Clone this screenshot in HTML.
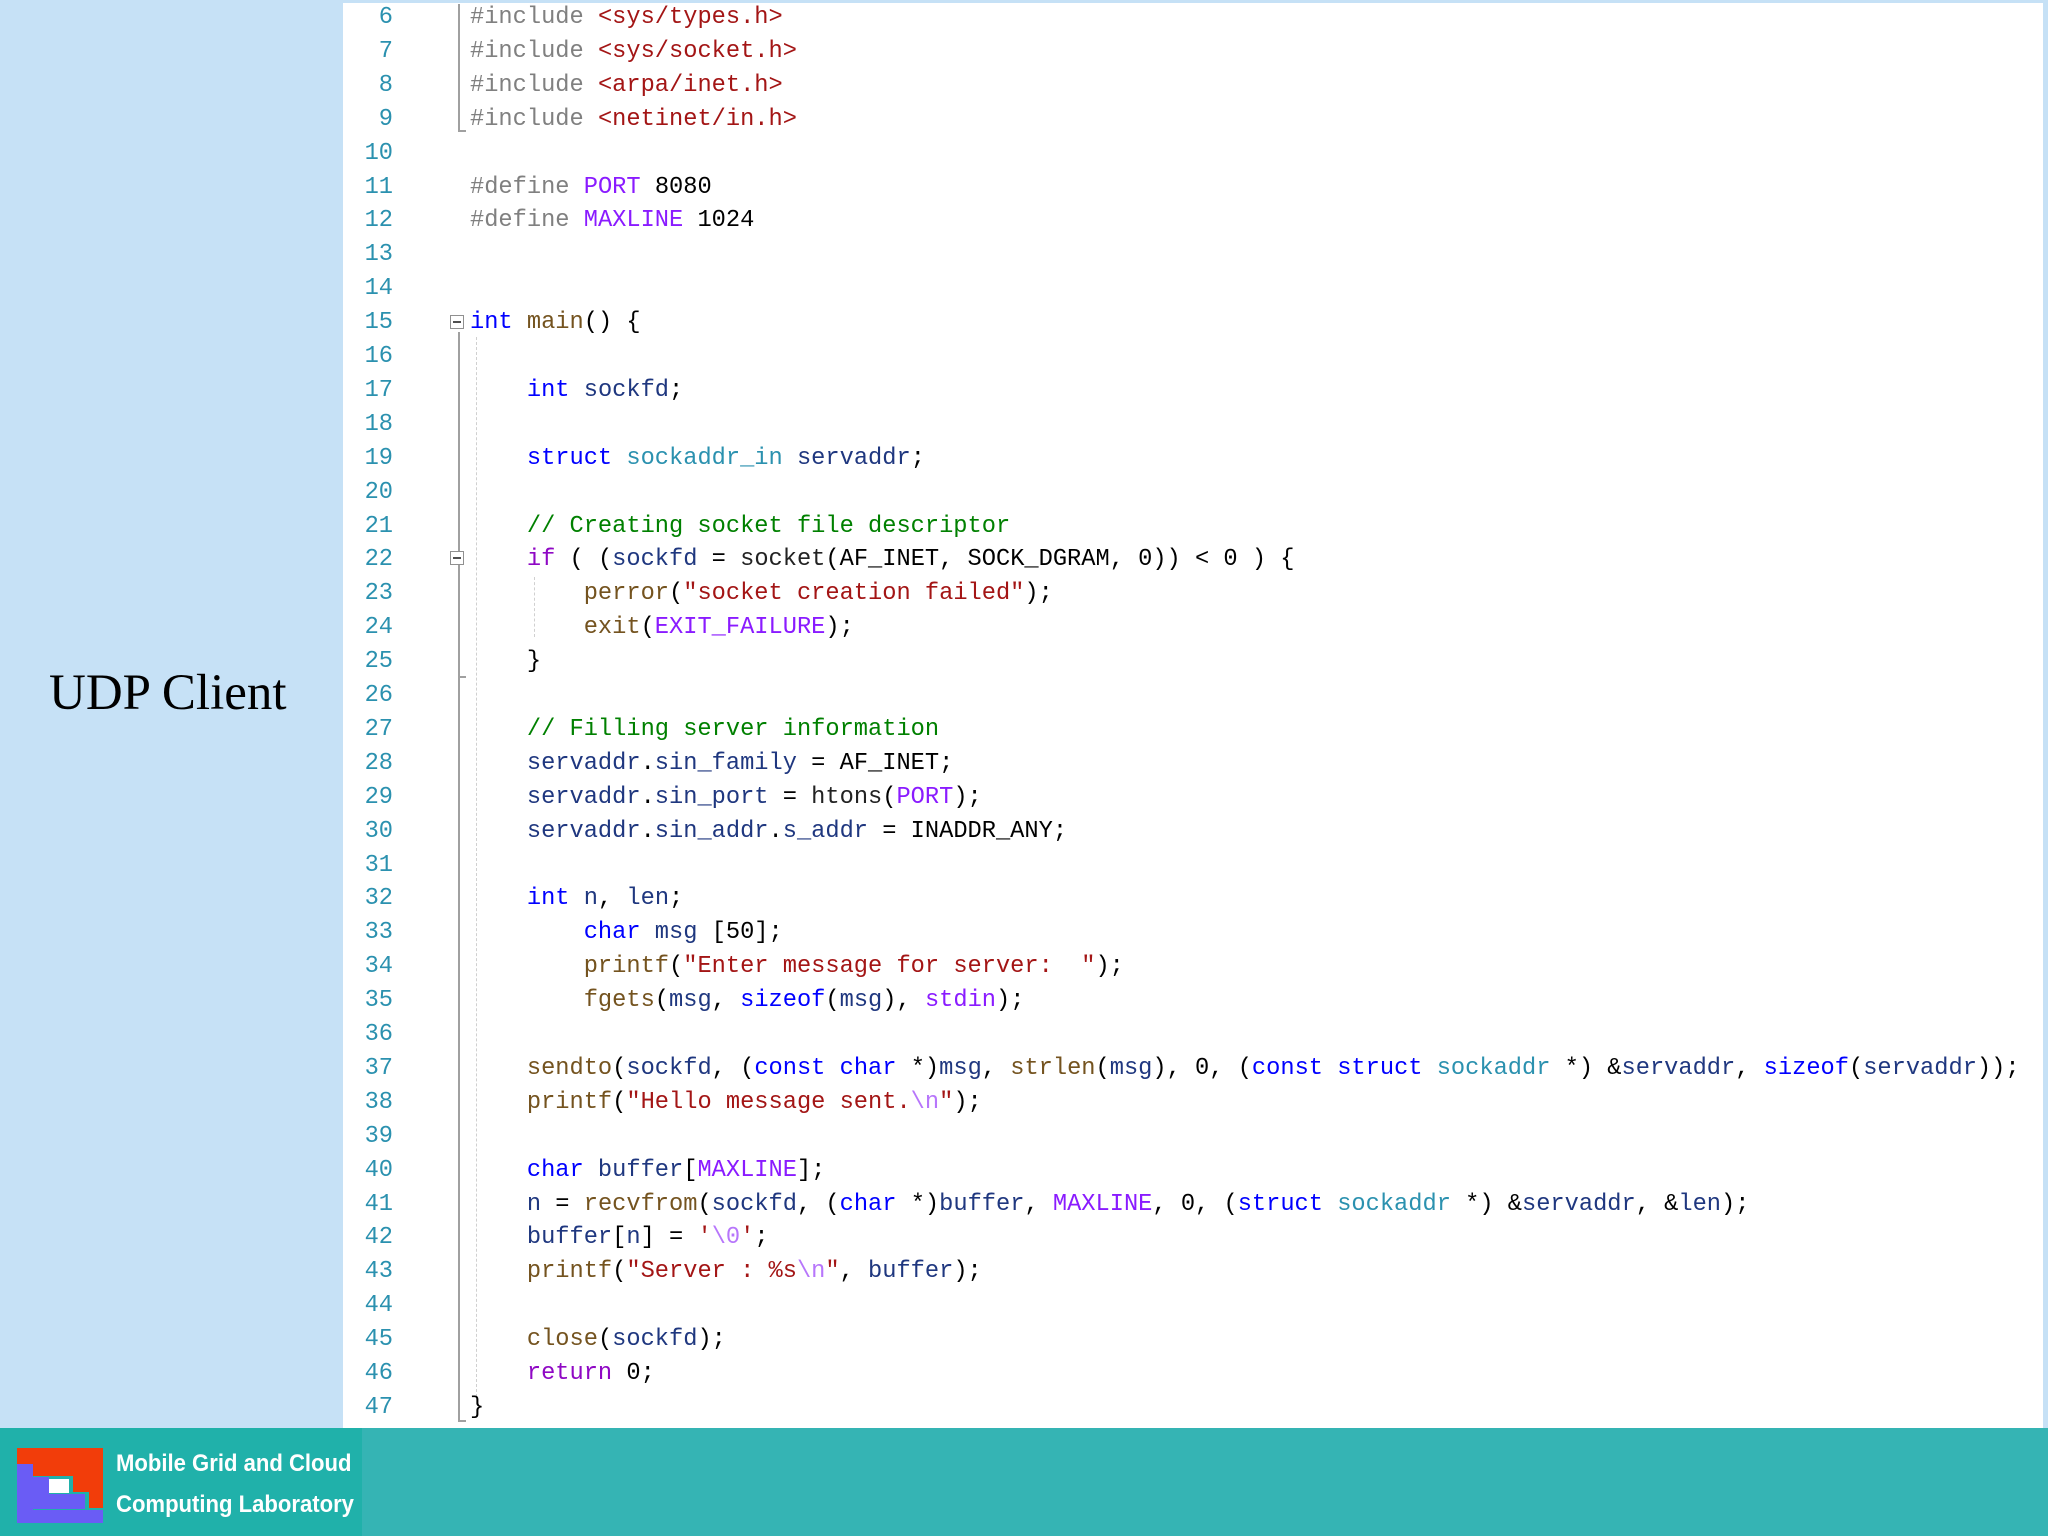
<!DOCTYPE html>
<html><head><meta charset="utf-8"><style>
html,body{margin:0;padding:0}
body{width:2048px;height:1536px;position:relative;overflow:hidden;background:#c6e1f6;font-family:"Liberation Mono",monospace}
#code{position:absolute;left:343px;top:3px;width:1700px;height:1425px;background:#fff}
#lines{position:absolute;left:0;top:4px;width:2048px;height:1424px}
.ln{position:absolute;left:343px;width:50px;text-align:right;color:#2b91af;font-size:23.7px;height:33.9px;line-height:33.9px;white-space:pre}
.cl{position:absolute;left:470px;font-size:23.7px;height:33.9px;line-height:33.9px;white-space:pre;color:#1f377f}
.k{color:#0000ff}.c{color:#8f08c4}.t{color:#2b91af}.s{color:#a31515}.g{color:#008000}.m{color:#8a1bff}.p{color:#808080}.f{color:#74531f}.e{color:#b776fb}.b{color:#000}.d{color:#222}
#title{position:absolute;left:49px;top:664px;font-family:"Liberation Serif",serif;font-size:51px;color:#000}
#foot{position:absolute;left:0;top:1428px;width:2048px;height:108px;background:#35b4b4}
#footl{position:absolute;left:0;top:0;width:362px;height:108px;background:#20b1aa}
.ft{position:absolute;left:116px;color:#fff;font-family:"Liberation Sans",sans-serif;font-weight:bold;font-size:24px;white-space:nowrap;transform:scaleX(0.92);transform-origin:left}
</style></head><body>
<div id="code"></div>
<div id="title">UDP Client</div>
<div id="lines">
<!-- fold margins -->
<div style="position:absolute;left:458px;top:0;width:2px;height:128px;background:#a0a0a0"></div>
<div style="position:absolute;left:458px;top:126px;width:8px;height:2px;background:#a0a0a0"></div>
<div style="position:absolute;left:458px;top:328px;width:2px;height:1090px;background:#a0a0a0"></div>
<div style="position:absolute;left:458px;top:1416px;width:8px;height:2px;background:#a0a0a0"></div>
<div style="position:absolute;left:458px;top:672px;width:8px;height:2px;background:#a0a0a0"></div>
<div style="position:absolute;left:450px;top:311px;width:14px;height:14px;border:1px solid #909090;background:#fff;box-sizing:border-box"><div style="position:absolute;left:2px;top:5px;width:8px;height:2px;background:#505050"></div></div>
<div style="position:absolute;left:450px;top:547px;width:14px;height:14px;border:1px solid #909090;background:#fff;box-sizing:border-box"><div style="position:absolute;left:2px;top:5px;width:8px;height:2px;background:#505050"></div></div>
<div style="position:absolute;left:476px;top:333px;width:0;height:1060px;border-left:1px dashed #d0d0d0"></div>
<div style="position:absolute;left:534px;top:573px;width:0;height:60px;border-left:1px dashed #d0d0d0"></div>

<div class="ln" style="top:-3px">6</div><div class="cl" style="top:-3px"><span class="p">#include</span> <span class="s">&lt;sys/types.h&gt;</span></div>
<div class="ln" style="top:30.9px">7</div><div class="cl" style="top:30.9px"><span class="p">#include</span> <span class="s">&lt;sys/socket.h&gt;</span></div>
<div class="ln" style="top:64.8px">8</div><div class="cl" style="top:64.8px"><span class="p">#include</span> <span class="s">&lt;arpa/inet.h&gt;</span></div>
<div class="ln" style="top:98.7px">9</div><div class="cl" style="top:98.7px"><span class="p">#include</span> <span class="s">&lt;netinet/in.h&gt;</span></div>
<div class="ln" style="top:132.6px">10</div>
<div class="ln" style="top:166.5px">11</div><div class="cl" style="top:166.5px"><span class="p">#define</span> <span class="m">PORT</span> <span class="b">8080</span></div>
<div class="ln" style="top:200.4px">12</div><div class="cl" style="top:200.4px"><span class="p">#define</span> <span class="m">MAXLINE</span> <span class="b">1024</span></div>
<div class="ln" style="top:234.3px">13</div>
<div class="ln" style="top:268.2px">14</div>
<div class="ln" style="top:302.1px">15</div><div class="cl" style="top:302.1px"><span class="k">int</span> <span class="f">main</span><span class="b">() {</span></div>
<div class="ln" style="top:336px">16</div>
<div class="ln" style="top:369.9px">17</div><div class="cl" style="top:369.9px">    <span class="k">int</span> sockfd<span class="b">;</span></div>
<div class="ln" style="top:403.8px">18</div>
<div class="ln" style="top:437.7px">19</div><div class="cl" style="top:437.7px">    <span class="k">struct</span> <span class="t">sockaddr_in</span> servaddr<span class="b">;</span></div>
<div class="ln" style="top:471.6px">20</div>
<div class="ln" style="top:505.5px">21</div><div class="cl" style="top:505.5px">    <span class="g">// Creating socket file descriptor</span></div>
<div class="ln" style="top:539.4px">22</div><div class="cl" style="top:539.4px">    <span class="c">if</span><span class="b"> ( (</span>sockfd <span class="b">=</span> <span class="d">socket</span><span class="b">(AF_INET, SOCK_DGRAM, 0)) &lt; 0 ) {</span></div>
<div class="ln" style="top:573.3px">23</div><div class="cl" style="top:573.3px">        <span class="f">perror</span><span class="b">(</span><span class="s">"socket creation failed"</span><span class="b">);</span></div>
<div class="ln" style="top:607.2px">24</div><div class="cl" style="top:607.2px">        <span class="f">exit</span><span class="b">(</span><span class="m">EXIT_FAILURE</span><span class="b">);</span></div>
<div class="ln" style="top:641.1px">25</div><div class="cl" style="top:641.1px"><span class="b">    }</span></div>
<div class="ln" style="top:675px">26</div>
<div class="ln" style="top:708.9px">27</div><div class="cl" style="top:708.9px">    <span class="g">// Filling server information</span></div>
<div class="ln" style="top:742.8px">28</div><div class="cl" style="top:742.8px">    servaddr<span class="b">.</span>sin_family <span class="b">= AF_INET;</span></div>
<div class="ln" style="top:776.7px">29</div><div class="cl" style="top:776.7px">    servaddr<span class="b">.</span>sin_port <span class="b">=</span> <span class="d">htons</span><span class="b">(</span><span class="m">PORT</span><span class="b">);</span></div>
<div class="ln" style="top:810.6px">30</div><div class="cl" style="top:810.6px">    servaddr<span class="b">.</span>sin_addr<span class="b">.</span>s_addr <span class="b">= INADDR_ANY;</span></div>
<div class="ln" style="top:844.5px">31</div>
<div class="ln" style="top:878.4px">32</div><div class="cl" style="top:878.4px">    <span class="k">int</span> n<span class="b">,</span> len<span class="b">;</span></div>
<div class="ln" style="top:912.3px">33</div><div class="cl" style="top:912.3px">        <span class="k">char</span> msg <span class="b">[50];</span></div>
<div class="ln" style="top:946.2px">34</div><div class="cl" style="top:946.2px">        <span class="f">printf</span><span class="b">(</span><span class="s">"Enter message for server:  "</span><span class="b">);</span></div>
<div class="ln" style="top:980.1px">35</div><div class="cl" style="top:980.1px">        <span class="f">fgets</span><span class="b">(</span>msg<span class="b">,</span> <span class="k">sizeof</span><span class="b">(</span>msg<span class="b">),</span> <span class="m">stdin</span><span class="b">);</span></div>
<div class="ln" style="top:1014px">36</div>
<div class="ln" style="top:1047.9px">37</div><div class="cl" style="top:1047.9px">    <span class="f">sendto</span><span class="b">(</span>sockfd<span class="b">, (</span><span class="k">const char</span><span class="b"> *)</span>msg<span class="b">,</span> <span class="f">strlen</span><span class="b">(</span>msg<span class="b">), 0, (</span><span class="k">const struct</span> <span class="t">sockaddr</span><span class="b"> *) &amp;</span>servaddr<span class="b">,</span> <span class="k">sizeof</span><span class="b">(</span>servaddr<span class="b">));</span></div>
<div class="ln" style="top:1081.8px">38</div><div class="cl" style="top:1081.8px">    <span class="f">printf</span><span class="b">(</span><span class="s">"Hello message sent.</span><span class="e">\n</span><span class="s">"</span><span class="b">);</span></div>
<div class="ln" style="top:1115.7px">39</div>
<div class="ln" style="top:1149.6px">40</div><div class="cl" style="top:1149.6px">    <span class="k">char</span> buffer<span class="b">[</span><span class="m">MAXLINE</span><span class="b">];</span></div>
<div class="ln" style="top:1183.5px">41</div><div class="cl" style="top:1183.5px">    n <span class="b">=</span> <span class="f">recvfrom</span><span class="b">(</span>sockfd<span class="b">, (</span><span class="k">char</span><span class="b"> *)</span>buffer<span class="b">,</span> <span class="m">MAXLINE</span><span class="b">, 0, (</span><span class="k">struct</span> <span class="t">sockaddr</span><span class="b"> *) &amp;</span>servaddr<span class="b">, &amp;</span>len<span class="b">);</span></div>
<div class="ln" style="top:1217.4px">42</div><div class="cl" style="top:1217.4px">    buffer<span class="b">[</span>n<span class="b">] =</span> <span class="s">'</span><span class="e">\0</span><span class="s">'</span><span class="b">;</span></div>
<div class="ln" style="top:1251.3px">43</div><div class="cl" style="top:1251.3px">    <span class="f">printf</span><span class="b">(</span><span class="s">"Server : %s</span><span class="e">\n</span><span class="s">"</span><span class="b">,</span> buffer<span class="b">);</span></div>
<div class="ln" style="top:1285.2px">44</div>
<div class="ln" style="top:1319.1px">45</div><div class="cl" style="top:1319.1px">    <span class="f">close</span><span class="b">(</span>sockfd<span class="b">);</span></div>
<div class="ln" style="top:1353px">46</div><div class="cl" style="top:1353px">    <span class="c">return</span> <span class="b">0;</span></div>
<div class="ln" style="top:1386.9px">47</div><div class="cl" style="top:1386.9px"><span class="b">}</span></div>
</div>

<div id="foot"><div id="footl">
<svg style="position:absolute;left:17px;top:20px" width="86" height="75" viewBox="0 0 86 75">
<rect x="0" y="16" width="16" height="59" fill="#6a5cf5"/>
<rect x="0" y="0" width="66" height="16" fill="#f23d0a"/>
<rect x="16" y="16" width="40" height="12" fill="#f23d0a"/>
<rect x="56" y="0" width="16" height="44" fill="#f23d0a"/>
<rect x="72" y="0" width="14" height="60" fill="#f23d0a"/>
<rect x="16" y="29" width="16" height="32" fill="#6a5cf5"/>
<rect x="32" y="31" width="20" height="14" fill="#fff"/>
<rect x="32" y="46" width="36" height="15" fill="#6a5cf5"/>
<rect x="16" y="62" width="70" height="13" fill="#6a5cf5"/>
</svg>
<div class="ft" style="top:22px">Mobile Grid and Cloud</div>
<div class="ft" style="top:63px">Computing Laboratory</div>
</div></div>
</body></html>
